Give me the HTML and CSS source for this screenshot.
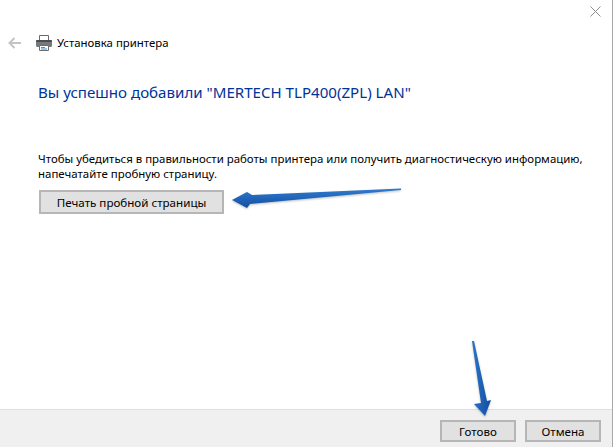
FILE: index.html
```html
<!DOCTYPE html>
<html lang="ru">
<head>
<meta charset="utf-8">
<title>Установка принтера</title>
<link rel="stylesheet" href="styles.css">
</head>
<body>
<div class="window">
  <div class="close-row">
    <svg class="close" width="11" height="11" viewBox="0 0 11 11"><path d="M.5.5l10 10M10.500.5l-10 10" stroke="#8c8c8c" stroke-width="1" fill="none"/></svg>
  </div>
  <header class="header">
    <svg class="back" width="13" height="12" viewBox="0 0 13 12"><path d="M6.500 1L1.500 6l5 5M1.500 6H13" stroke="#c4c4c4" stroke-width="2" fill="none"/></svg>
    <svg class="printer" width="16" height="16" viewBox="0 0 16 16">
      <path d="M3.500.5h9v5h-9z" fill="#fff" stroke="#6b6b6b"/>
      <rect x="0" y="5" width="16" height="7" rx="1.500" fill="#75787c"/>
      <rect x="0" y="5" width="16" height="2" rx="1" fill="#4a4c50"/>
      <path d="M3.500 10.500h9v5h-9z" fill="#fff" stroke="#6b6b6b"/>
      <path d="M5 12.500h4" stroke="#3f8fd0"/>
      <path d="M5 14h6" stroke="#3f8fd0"/>
    </svg>
    <span class="title">Установка принтера</span>
  </header>
  <main class="content">
    <h1 class="heading">Вы успешно добавили "MERTECH TLP400(ZPL) LAN"</h1>
    <p class="text">Чтобы убедиться в правильности работы принтера или получить диагностическую информацию,<br>напечатайте пробную страницу.</p>
    <button class="btn btn-test">Печать пробной страницы</button>
  </main>
  <footer class="footer">
    <button class="btn btn-foot">Готово</button>
    <button class="btn btn-foot">Отмена</button>
  </footer>
  <svg class="arrows" width="613" height="447" viewBox="0 0 613 447">
    <defs>
      <linearGradient id="arrow-h" x1="0" y1="0" x2="0" y2="1"><stop offset="0" stop-color="#2f7bd0"/><stop offset="1" stop-color="#124e9f"/></linearGradient>
      <linearGradient id="arrow-v" x1="0" y1="0" x2="1" y2="0"><stop offset="0" stop-color="#2a74c8"/><stop offset="1" stop-color="#124e9f"/></linearGradient>
    </defs>
    <path class="arrow" d="M401 188.500L252 195L247 192L232 200L247 208L250 204L401 190Z" fill="url(#arrow-h)"/>
    <path class="arrow" d="M472 341L474 341L487 401L491 400L485 416L474 404L481 403Z" fill="url(#arrow-v)"/>
  </svg>
</div>
</body>
</html>
```
FILE: styles.css
```css
html, body { margin: 0; padding: 0; }
body { width: 613px; height: 447px; overflow: hidden; background: #fff; font-family: "Noto Sans", "Open Sans", sans-serif; color: #000; }
.window { position: relative; width: 612px; height: 447px; border-right: 1px solid #a8a8a8; display: flex; flex-direction: column; }
.close-row { height: 31px; display: flex; justify-content: flex-end; align-items: flex-start; padding: 6px 11px 0 0; box-sizing: border-box; }
.header { height: 24px; display: flex; align-items: center; padding-left: 8px; }
.back { margin-right: 15px; }
.printer { margin-right: 5px; }
.title { font-size: 11.400px; line-height: 24px; }
.content { flex: 1; padding: 0 0 0 38px; }
.heading { margin: 26px 0 0; font-size: 15.100px; line-height: 22px; font-weight: 400; color: #003399; }
.text { margin: 48px 0 0; font-size: 11.440px; line-height: 15px; white-space: nowrap; }
.btn { font-family: inherit; font-size: 11.600px; color: #000; background: #e1e1e1; border: 2px solid #b6b6b6; padding: 0; box-sizing: border-box; display: block; }
.btn-test { width: 185px; height: 24px; margin: 9px 0 0 1px; }
.footer { height: 38px; background: #f0f0f0; border-top: 1px solid #dfdfdf; display: flex; justify-content: flex-end; gap: 9px; padding: 10px 11px 0 0; box-sizing: border-box; }
.btn-foot { width: 76px; height: 22px; }
.arrows { position: absolute; left: 0; top: 0; pointer-events: none; }
.arrow { filter: drop-shadow(0 1px 1px rgba(0, 0, 0, 0.25)); }
```
